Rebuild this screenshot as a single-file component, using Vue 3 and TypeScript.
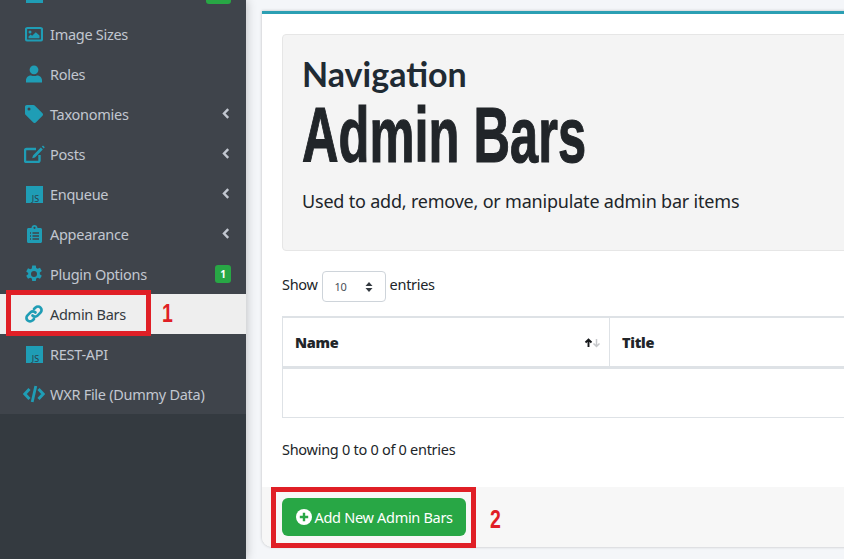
<template>
  <div class="page">
    <aside class="sidebar">
      <ul class="menu">
        <li v-for="item in menu" :key="item.name" class="menu-item" :class="{ active: item.active }">
          <span class="menu-icon">
            <span v-if="item.icon === 'js'" class="js-icon">{{ item.name ? 'JS' : '' }}</span>
            <svg v-else :width="item.w || 18" height="18" :viewBox="item.box || '0 0 18 18'" v-html="icons[item.icon]"></svg>
          </span>
          <span class="menu-label">{{ item.name }}</span>
          <span v-if="item.badge" class="badge">{{ item.badge }}</span>
          <span v-if="!item.name" class="badge badge-wide"></span>
          <svg v-if="item.arrow" class="arrow" width="8" height="11" viewBox="0 0 8 11"><path d="M6.2 1.2 2 5.500l4.200 4.300" fill="none" stroke="#c2c7d0" stroke-width="2.400" /></svg>
        </li>
      </ul>
    </aside>

    <main class="content">
      <section class="card">
        <div class="card-body">
          <div class="jumbotron">
            <div class="eyebrow">Navigation</div>
            <h1 class="title"><span>Admin Bars</span></h1>
            <p class="lead">Used to add, remove, or manipulate admin bar items</p>
          </div>

          <div class="length">
            <span class="length-text">Show</span>
            <span class="select">
              <span>10</span>
              <svg width="8" height="12" viewBox="0 0 8 12"><path d="M4 1 7.500 5h-7zM4 11 .5 7h7z" fill="#343a40" /></svg>
            </span>
            <span class="length-text">entries</span>
          </div>

          <table class="table">
            <thead>
              <tr>
                <th class="col-name">
                  Name
                  <svg class="sort" width="17" height="10" viewBox="0 0 17 10">
                    <path d="M4.500 9V2M1.500 4.500l3-3 3 3" fill="none" stroke="#16181b" stroke-width="1.900" />
                    <path d="M12.500 1v7M9.500 5.500l3 3 3-3" fill="none" stroke="#c5c7ca" stroke-width="1.500" />
                  </svg>
                </th>
                <th>Title</th>
              </tr>
            </thead>
            <tbody>
              <tr><td colspan="2"></td></tr>
            </tbody>
          </table>

          <div class="info">Showing 0 to 0 of 0 entries</div>
        </div>

        <div class="card-footer">
          <button class="btn-add" type="button">
            <svg width="16" height="16" viewBox="0 0 16 16"><circle cx="8" cy="8" r="8" fill="#fff" /><path d="M8 3.800v8.400M3.800 8h8.400" stroke="#28a745" stroke-width="2.400" /></svg>
            Add New Admin Bars
          </button>
        </div>
      </section>
    </main>

    <!-- annotations -->
    <div class="mark mark-one"></div>
    <span class="mark-num num-one">1</span>
    <div class="mark mark-two"></div>
    <span class="mark-num num-two">2</span>
  </div>
</template>

<script setup lang="ts">
interface MenuItem {
  name: string
  icon: string
  active?: boolean
  arrow?: boolean
  badge?: string
  w?: number
  box?: string
}

const icons: Record<string, string> = {
  image: '<rect x="1" y="3" width="16" height="12.500" rx="1.400" fill="none" stroke="#1f9db5" stroke-width="2.200"/><circle cx="5" cy="7" r="1.500" fill="#1f9db5"/><path d="M3.500 13.200v-1.600l2.200-2 1.400 1.200 3.700-3.600 3.700 3.400v2.600z" fill="#1f9db5"/>',
  user: '<circle cx="9" cy="4.800" r="4.400" fill="#1f9db5"/><path d="M1 17.500v-2.200C1 12.400 3.400 10.400 6 10.400c1 .4 2 .6 3 .6s2-.2 3-.6c2.600 0 5 2 5 4.900v2.200z" fill="#1f9db5"/>',
  tag: '<path d="M0 1.800C0 .8.800 0 1.800 0h6.600c.5 0 1 .2 1.300.5l7.800 7.800c.7.700.7 1.800 0 2.500l-6.700 6.700c-.7.700-1.800.7-2.500 0L.5 9.700C.2 9.400 0 8.900 0 8.400zM4 5.500a1.500 1.500 0 1 0 0-3 1.500 1.500 0 0 0 0 3z" fill="#1f9db5" fill-rule="evenodd"/>',
  edit: '<path d="M17.800 1.600 19 .5l1.800 1.800-1.100 1.200zM9 10.500l7.800-7.900 2 2L11 12.500l-2.800.8z" fill="#1f9db5"/><path d="M15.500 10v5.500a1.500 1.500 0 0 1-1.500 1.500H2.500A1.500 1.500 0 0 1 1 15.500V5.500A1.500 1.500 0 0 1 2.500 4H12" fill="none" stroke="#1f9db5" stroke-width="2.400"/>',
  clipboard: '<path d="M1.500 3H4.500C4.500 1.200 5.800 0 7.500 0s3 1.200 3 3h3c.8 0 1.500.7 1.500 1.500v12c0 .8-.7 1.500-1.500 1.500h-12C.7 18 0 17.300 0 16.500v-12C0 3.700.7 3 1.500 3z" fill="#1f9db5"/><path d="M5.500 8h6.500M5.500 11h6.500M5.500 14h6.500M3 8h1M3 11h1M3 14h1" stroke="#3f444b" stroke-width="1.300"/><circle cx="7.500" cy="2.800" r="1.100" fill="#3f444b"/>',
  cog: '<path d="M7.200 0h3.600l.4 2.500 1.500.8 2.300-1 1.800 3.100-2 1.500v1.800l2 1.500-1.800 3.100-2.300-1-1.500.8-.4 2.500H7.200l-.4-2.500-1.500-.8-2.300 1-1.800-3.100 2-1.500V7.400l-2-1.500 1.800-3.100 2.300 1 1.500-.8zM9 11.500a3 3 0 1 0 0-6 3 3 0 0 0 0 6z" transform="translate(0 .5)" fill="#1f9db5" fill-rule="evenodd"/>',
  link: '<path d="M7.500 10.500a3.400 3.400 0 0 0 5 .1l3-3a3.500 3.500 0 0 0-5-5L9 4" fill="none" stroke="#1f9db5" stroke-width="2.700" stroke-linecap="round"/><path d="M10.500 7.500a3.400 3.400 0 0 0-5-.1l-3 3a3.500 3.500 0 0 0 5 5L9 14" fill="none" stroke="#1f9db5" stroke-width="2.700" stroke-linecap="round"/>',
  code: '<path d="M6.500 4 1.800 9l4.700 5M15.500 4l4.700 5-4.700 5" fill="none" stroke="#1f9db5" stroke-width="3"/><path d="M12.800 1 9.200 17" stroke="#1f9db5" stroke-width="2.800"/>'
}

const menu: MenuItem[] = [
  { name: '', icon: 'js' },
  { name: 'Image Sizes', icon: 'image' },
  { name: 'Roles', icon: 'user' },
  { name: 'Taxonomies', icon: 'tag', arrow: true },
  { name: 'Posts', icon: 'edit', arrow: true, w: 21, box: '0 0 21 18' },
  { name: 'Enqueue', icon: 'js', arrow: true },
  { name: 'Appearance', icon: 'clipboard', arrow: true, w: 15, box: '0 0 15 18' },
  { name: 'Plugin Options', icon: 'cog', badge: '1' },
  { name: 'Admin Bars', icon: 'link', active: true },
  { name: 'REST-API', icon: 'js' },
  { name: 'WXR File (Dummy Data)', icon: 'code', w: 22, box: '0 0 22 18' }
]
</script>

<style>
html,
body {
  margin: 0;
  background: #f4f6f9;
  overflow: hidden;
}
</style>

<style scoped>
.page {
  position: relative;
  display: flex;
  width: 844px;
  height: 559px;
  overflow: hidden;
  font-family: "Noto Sans", "Open Sans", sans-serif;
  color: #212529;
}

.sidebar {
  flex: none;
  width: 246px;
  background: #343a40;
  box-shadow: 0 0 10px rgba(0, 0, 0, 0.25);
}

.menu {
  list-style: none;
  margin: -26px 0 0;
  padding: 0;
  background: #3f444b;
}

.menu-item {
  display: flex;
  align-items: center;
  height: 40px;
  padding-right: 15px;
  color: #c2c7d0;
  font-size: 14.5px;
  letter-spacing: -0.28px;
}

.menu-item.active {
  background: #eeeeee;
  color: #343a40;
}

.menu-icon {
  flex: none;
  display: flex;
  justify-content: center;
  align-items: center;
  width: 22px;
  margin-left: 23px;
  margin-right: 5px;
}

.js-icon {
  display: flex;
  align-items: flex-end;
  justify-content: center;
  box-sizing: border-box;
  width: 17px;
  height: 17px;
  padding-left: 3px;
  background: #1f9db5;
  color: #2b3f4c;
  font-size: 9px;
  letter-spacing: 0;
  line-height: 1;
}

.menu-label {
  flex: 1;
  padding-bottom: 1px;
  white-space: nowrap;
}

.badge {
  width: 16px;
  height: 18px;
  border-radius: 3px;
  background: #28a745;
  color: #fff;
  font-size: 10px;
  font-weight: 700;
  letter-spacing: 0;
  line-height: 18px;
  text-align: center;
}

.badge-wide {
  width: 25px;
  margin-top: 1px;
}

.arrow {
  margin-right: 1px;
  margin-bottom: 2px;
}

.content {
  flex: none;
  width: 800px;
  padding: 11px 0 0 16px;
}

.card {
  height: 536px;
  box-sizing: border-box;
  display: flex;
  flex-direction: column;
  background: #fff;
  border-top: 3px solid #2b9fb3;
  border-radius: 0 0 0 10px;
  box-shadow: 0 0 3px rgba(0, 0, 0, 0.25);
  overflow: hidden;
}

.card-body {
  flex: 1;
  padding: 20px 20px 0;
}

.jumbotron {
  box-sizing: border-box;
  height: 217px;
  padding: 20px 19px;
  background: #f4f4f4;
  border: 1px solid #e6e6e6;
  border-radius: 4px;
}

.eyebrow {
  font-family: "Lato", sans-serif;
  font-size: 34px;
  font-weight: 700;
  line-height: 38px;
  color: #1f2a33;
}

.title {
  display: flex;
  align-items: center;
  margin: 1px 0 0;
  height: 82px;
  font-family: "Liberation Sans", sans-serif;
  font-size: 66px;
  font-weight: 700;
  line-height: 70px;
  white-space: nowrap;
  -webkit-text-stroke: 1px #212529;
}

.title span {
  display: inline-block;
  transform: scale(0.767, 1.18);
  transform-origin: 0 50%;
}

.lead {
  margin: 11px 0 0;
  font-size: 18px;
  letter-spacing: -0.2px;
  line-height: 28px;
  color: #212529;
}

.length {
  display: flex;
  align-items: center;
  gap: 4px;
  margin-top: 20px;
  font-size: 14.5px;
  letter-spacing: -0.3px;
}

.length-text {
  padding-bottom: 6px;
}

.select {
  display: flex;
  align-items: center;
  justify-content: space-between;
  box-sizing: border-box;
  width: 64px;
  height: 31px;
  padding: 0 12px;
  border: 1px solid #ced4da;
  border-radius: 4px;
  color: #495057;
  font-size: 11px;
}

.table {
  width: 100%;
  height: 102px;
  margin-top: 14px;
  border-collapse: collapse;
  table-layout: fixed;
  font-size: 14.5px;
}

.table th,
.table td {
  padding: 0 12px;
  border: 1px solid #dee2e6;
  text-align: left;
}

.table th {
  height: 47px;
  padding-bottom: 1px;
  border-top-width: 2px;
  border-bottom-width: 3px;
  font-weight: 900;
  letter-spacing: -0.3px;
}

.col-name {
  position: relative;
  width: 302px;
}

.sort {
  position: absolute;
  top: 20px;
  right: 8px;
}

.info {
  margin-top: 21px;
  font-size: 14.5px;
  letter-spacing: -0.28px;
}

.card-footer {
  height: 60px;
  box-sizing: border-box;
  padding: 11px 20px;
  background: #f7f7f7;
}

.btn-add {
  display: flex;
  align-items: center;
  gap: 3px;
  height: 38px;
  padding: 0 13.5px;
  border: 0;
  border-radius: 6px;
  background: #28a745;
  color: #fff;
  font-family: inherit;
  font-size: 14.5px;
  letter-spacing: -0.3px;
}

.mark {
  position: absolute;
  box-sizing: border-box;
  border: 5px solid #e01f26;
}

.mark-one {
  left: 6px;
  top: 290px;
  width: 145px;
  height: 46px;
}

.mark-two {
  left: 271px;
  top: 487px;
  width: 205px;
  height: 61px;
}

.mark-num {
  position: absolute;
  color: #e01f26;
  font-family: "Liberation Sans", sans-serif;
  font-size: 26px;
  font-weight: 700;
  line-height: 1;
  transform: scaleX(0.75);
  transform-origin: 0 50%;
}

.num-one {
  left: 162px;
  top: 300px;
}

.num-two {
  left: 490px;
  top: 506px;
}
</style>
